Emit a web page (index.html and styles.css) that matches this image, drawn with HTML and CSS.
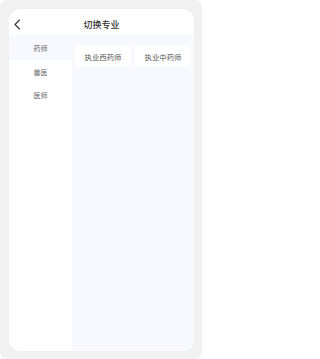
FILE: index.html
```html
<!DOCTYPE html>
<html lang="zh-CN">
<head>
<meta charset="utf-8">
<title>切换专业</title>
<link rel="stylesheet" href="styles.css">
</head>
<body>
<div class="frame">
  <div class="card">
    <div class="header">
      <div class="back">
        <svg width="7" height="11" viewBox="0 0 7 11"><polyline points="5.5,1 1,5.5 5.5,10" fill="none" stroke="#333" stroke-width="1.1" stroke-linecap="round" stroke-linejoin="round"/></svg>
      </div>
      <div class="title">切换专业</div>
      <div></div>
    </div>
    <div class="content">
      <div class="sidebar">
        <div class="item active">药师</div>
        <div class="item">兽医</div>
        <div class="item">医师</div>
      </div>
      <div class="panel">
        <div class="tag">执业西药师</div>
        <div class="tag">执业中药师</div>
      </div>
    </div>
  </div>
</div>
</body>
</html>
```

FILE: styles.css
```css
html, body {
  margin: 0;
  padding: 0;
  background: #ffffff;
}
body {
  font-family: "Noto Sans CJK SC", "Noto Sans", sans-serif;
}
.frame {
  box-sizing: border-box;
  width: 202px;
  height: 359px;
  padding: 9px 8px 8px 9px;
  background: #f1f1f1;
  border-radius: 7px;
}
.card {
  height: 100%;
  background: #ffffff;
  border-radius: 12px;
  overflow: hidden;
  display: flex;
  flex-direction: column;
}
.header {
  box-sizing: border-box;
  height: 26px;
  padding-top: 5px;
  flex: none;
  display: grid;
  grid-template-columns: 1fr auto 1fr;
  align-items: center;
}
.back {
  padding-left: 5px;
  display: flex;
  align-items: center;
}
.title {
  font-size: 9px;
  font-weight: 500;
  color: #333333;
  line-height: 12px;
}
.content {
  flex: 1;
  display: flex;
}
.sidebar {
  width: 63px;
  flex: none;
  background: #ffffff;
}
.item {
  height: 23px;
  display: flex;
  align-items: center;
  justify-content: center;
  font-size: 7px;
  color: #666666;
}
.item.active {
  background: #f7f9fe;
  height: 25px;
}
.panel {
  flex: 1;
  background: #f7f9fe;
  padding: 10px 3px;
  display: grid;
  grid-template-columns: 1fr 1fr;
  column-gap: 4px;
  align-content: start;
}
.tag {
  height: 22px;
  background: #ffffff;
  border-radius: 2px;
  display: flex;
  align-items: center;
  justify-content: center;
  font-size: 7.4px;
  color: #555555;
}
```
